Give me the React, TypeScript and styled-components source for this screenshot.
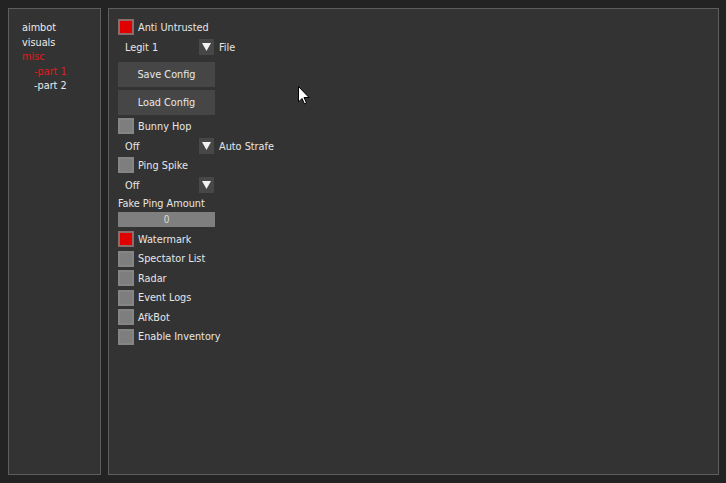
import React from 'react'
import styled, { createGlobalStyle } from 'styled-components'

const GlobalStyle = createGlobalStyle`
    html, body {
        margin: 0;
        padding: 0;
        background: #232323;
    }
    body {
        font-family: "DejaVu Sans Condensed", "DejaVu Sans", sans-serif;
        font-size: 10.8px;
        color: #e6e6e6;
    }
`

const navItems = [
    { label: 'aimbot', active: false, sub: false },
    { label: 'visuals', active: false, sub: false },
    { label: 'misc', active: true, sub: false },
    { label: '-part 1', active: true, sub: true },
    { label: '-part 2', active: false, sub: true }
]

const bottomToggles = [
    { label: 'Watermark', checked: true },
    { label: 'Spectator List', checked: false },
    { label: 'Radar', checked: false },
    { label: 'Event Logs', checked: false },
    { label: 'AfkBot', checked: false },
    { label: 'Enable Inventory', checked: false }
]

const Toggle: React.FunctionComponent<{ label: string, checked: boolean, top?: number }> = ({ label, checked, top = 0 }) => (
    <ToggleRow $top={top}>
        <Box $checked={checked} />
        <span>{label}</span>
    </ToggleRow>
)

const Dropdown: React.FunctionComponent<{ value: string, label?: string, top?: number }> = ({ value, label, top = 0 }) => (
    <DropdownRow $top={top}>
        <Select>
            <span>{value}</span>
            <Arrow>
                <svg width="9" height="8" viewBox="0 0 9 8">
                    <polygon points="0,0 9,0 4.5,8" fill="#f2f2f2" />
                </svg>
            </Arrow>
        </Select>
        {label && <span>{label}</span>}
    </DropdownRow>
)

export default function App() {
    return (
        <>
            <GlobalStyle />
            <Page>
                <Sidebar>
                    {navItems.map(item => (
                        <NavItem key={item.label} $active={item.active} $sub={item.sub}>
                            {item.label}
                        </NavItem>
                    ))}
                </Sidebar>
                <Content>
                    <Toggle label="Anti Untrusted" checked />
                    <Dropdown value="Legit 1" label="File" top={4} />
                    <Button $top={7}>Save Config</Button>
                    <Button $top={3}>Load Config</Button>
                    <Toggle label="Bunny Hop" checked={false} top={3} />
                    <Dropdown value="Off" label="Auto Strafe" top={4} />
                    <Toggle label="Ping Spike" checked={false} top={3} />
                    <Dropdown value="Off" top={4} />
                    <SliderLabel>Fake Ping Amount</SliderLabel>
                    <Slider>0</Slider>
                    <ToggleList>
                        {bottomToggles.map(t => (
                            <Toggle key={t.label} label={t.label} checked={t.checked} />
                        ))}
                    </ToggleList>
                    <Cursor>
                        <svg width="12" height="19" viewBox="0 0 12 19">
                            <path d="M0.5 0.5 L0.5 16 L4 12.5 L6.5 18 L8.5 17 L6 11.5 L11 11.5 Z" fill="#ffffff" stroke="#000000" strokeWidth="1" />
                        </svg>
                    </Cursor>
                </Content>
            </Page>
        </>
    )
}

const Page = styled.div`
    display: flex;
    gap: 7px;
    height: 483px;
    box-sizing: border-box;
    padding: 8px 7px 8px 8px;
`

const Panel = styled.div`
    background: #333333;
    border: 1px solid #5e5e5e;
    box-sizing: border-box;
    height: 467px;
`

const Sidebar = styled(Panel)`
    width: 93px;
    flex-shrink: 0;
    padding: 12px 0 0 13px;
    display: flex;
    flex-direction: column;
`

const NavItem = styled.div<{ $active: boolean, $sub: boolean }>`
    height: 14.6px;
    line-height: 14px;
    color: ${p => (p.$active ? '#e01b1b' : '#ececec')};
    padding-left: ${p => (p.$sub ? '12px' : '0')};
`

const Content = styled(Panel)`
    flex: 1;
    position: relative;
    padding: 10px 0 0 9px;
    display: flex;
    flex-direction: column;
    align-items: flex-start;
`

const ToggleRow = styled.div<{ $top: number }>`
    display: flex;
    align-items: center;
    gap: 4px;
    height: 16px;
    margin-top: ${p => p.$top}px;
`

const Box = styled.div<{ $checked: boolean }>`
    width: 16px;
    height: 16px;
    box-sizing: border-box;
    border: 2px solid ${p => (p.$checked ? '#8c6b6b' : '#858585')};
    background: ${p => (p.$checked ? '#e00000' : '#7e7e7e')};
`

const ToggleList = styled.div`
    display: flex;
    flex-direction: column;
    gap: 3.6px;
    margin-top: 4px;
`

const DropdownRow = styled.div<{ $top: number }>`
    display: flex;
    align-items: center;
    gap: 5px;
    height: 16px;
    margin-top: ${p => p.$top}px;
`

const Select = styled.div`
    width: 96px;
    height: 16px;
    display: flex;
    align-items: center;
    justify-content: space-between;
    padding-left: 7px;
    box-sizing: border-box;
`

const Arrow = styled.div`
    width: 15px;
    height: 16px;
    background: #474747;
    display: flex;
    align-items: center;
    justify-content: center;
`

const Button = styled.div<{ $top: number }>`
    width: 97px;
    height: 25px;
    margin-top: ${p => p.$top}px;
    background: #464646;
    display: flex;
    align-items: center;
    justify-content: center;
    color: #e6e6e6;
`

const SliderLabel = styled.div`
    margin-top: 4px;
    height: 14px;
    line-height: 14px;
`

const Slider = styled.div`
    margin-top: 1px;
    width: 97px;
    height: 15px;
    background: #7f7f7f;
    color: #dcdcdc;
    font-size: 10px;
    display: flex;
    align-items: center;
    justify-content: center;
`

const Cursor = styled.div`
    position: absolute;
    left: 189px;
    top: 77px;
    line-height: 0;
`
